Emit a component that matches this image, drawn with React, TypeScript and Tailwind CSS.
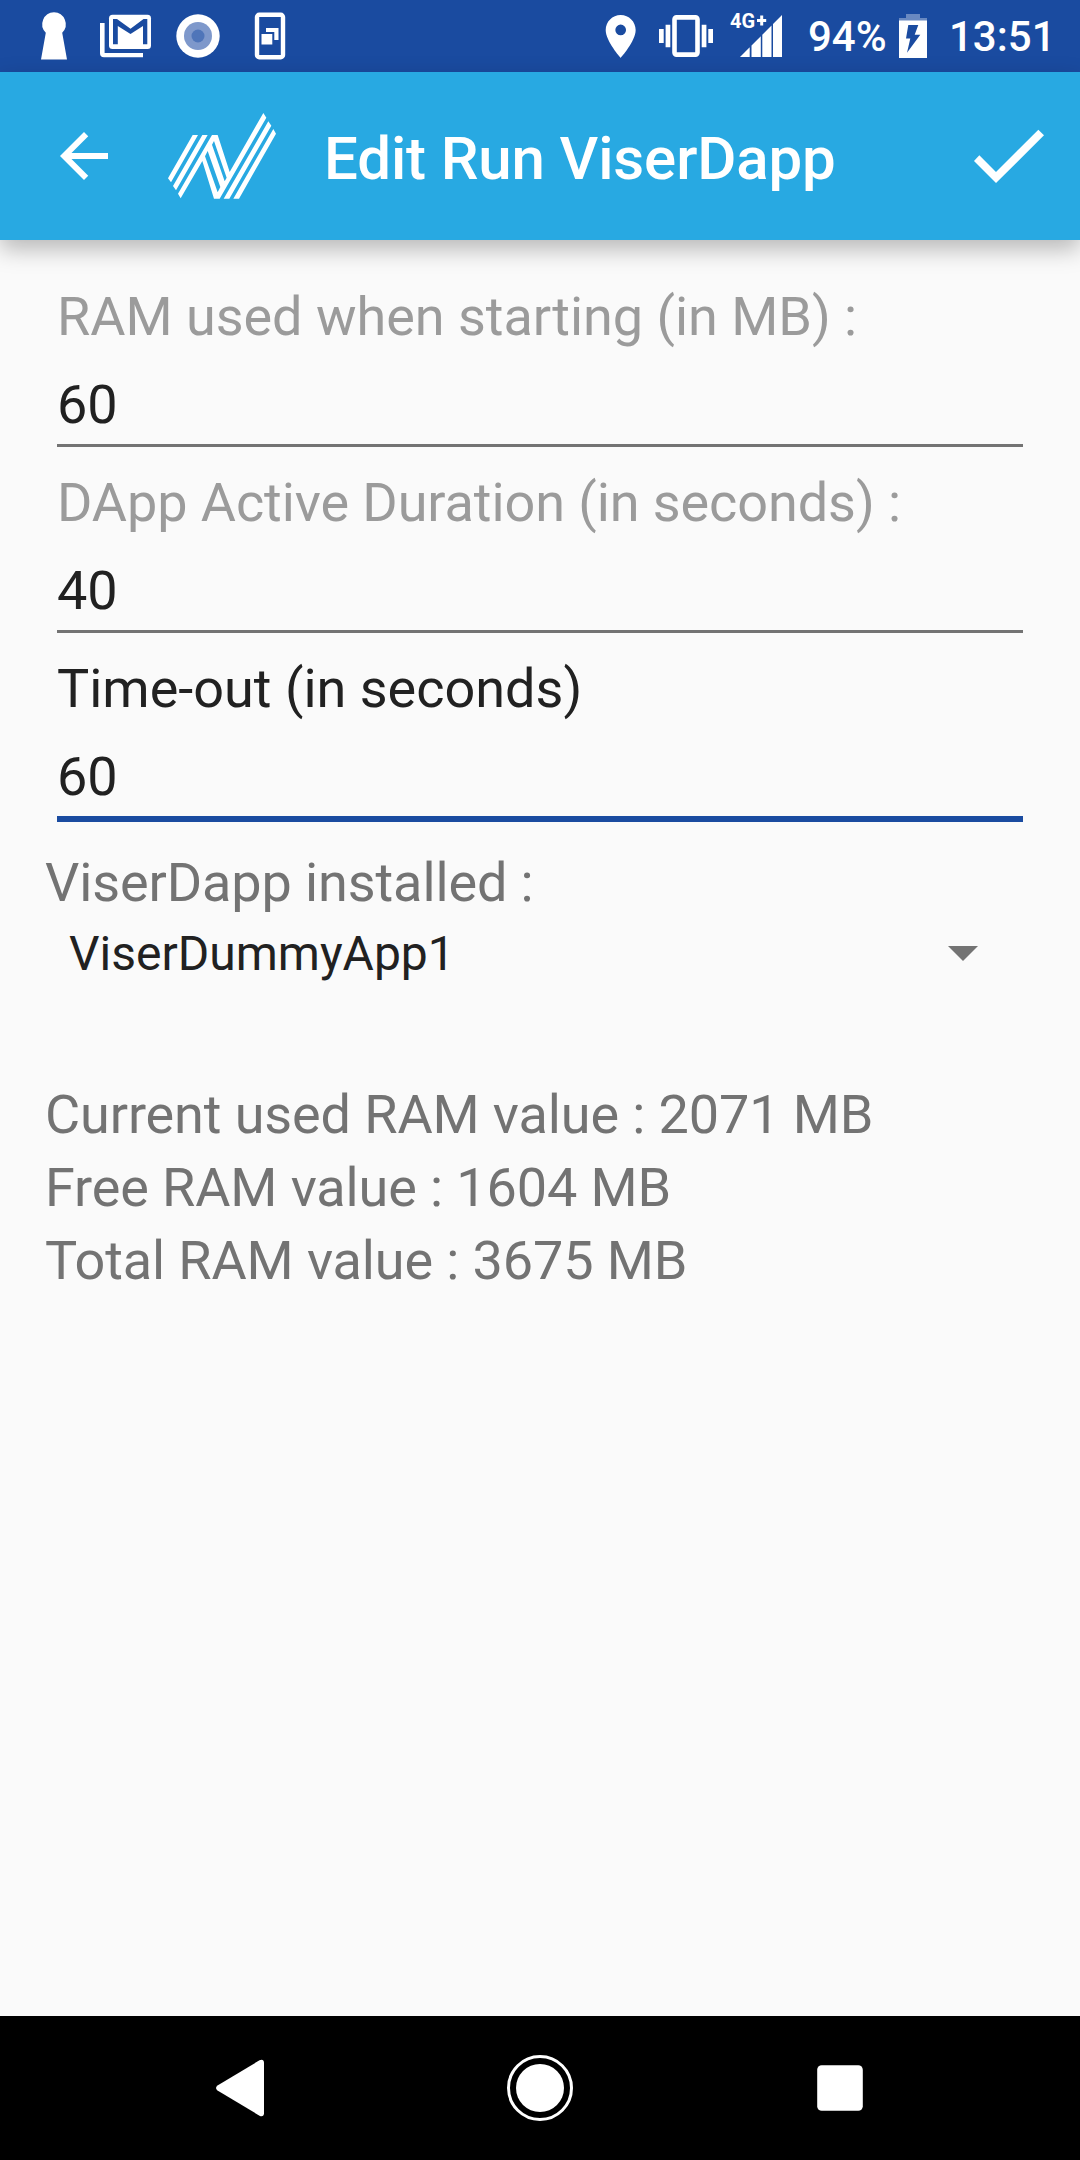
import type { ReactNode } from "react";

function StatusBar() {
  return (
    <div className="flex h-[72px] items-center bg-[#1a4ba0] text-white">
      <svg className="ml-[38px] h-[72px] w-8 shrink-0" viewBox="38 0 32 72" fill="#fff">
        <path d="M54 12.3a12 12 0 0 1 8.2 20.5L67 59.5H41l4.8-26.7A12 12 0 0 1 54 12.3z" />
      </svg>
      <svg className="ml-[26px] h-[72px] w-[60px] shrink-0" viewBox="96 0 60 72" fill="#fff">
        <path d="M100 23h4.6v30H143v4.3h-39a4 4 0 0 1-4-4z" />
        <rect x="109" y="14.7" width="42" height="34.3" rx="3.5" />
        <path fill="#1a4ba0" d="M113 44.3V19h4l13.5 9.8L143.5 19h3.8v25.3H143V26l-12.5 8L117.8 26v18.3z" />
      </svg>
      <svg className="ml-4 h-[72px] w-[52px] shrink-0" viewBox="172 0 52 72">
        <circle cx="198" cy="36" r="21.7" fill="#fff" />
        <circle cx="198" cy="36" r="14" fill="#7e98cb" />
        <circle cx="198" cy="36" r="6.5" fill="#4f75b9" />
      </svg>
      <svg className="ml-6 h-[72px] w-11 shrink-0" viewBox="248 0 44 72" fill="#fff">
        <rect x="257" y="14.8" width="26" height="42.4" rx="2.2" fill="none" stroke="#fff" strokeWidth="4.4" />
        <path d="M261.5 34h10.8v10.5h-10.8zM266 28h12.5v12h-4.2v-8H266z" />
      </svg>
      <div className="flex-1" />
      <svg className="h-[72px] w-9 shrink-0" viewBox="602 0 36 72" fill="#fff">
        <path
          transform="translate(595 10.7) scale(2.14)"
          d="M12 2C8.13 2 5 5.13 5 9c0 5.25 7 13 7 13s7-7.75 7-13c0-3.87-3.13-7-7-7zm0 9.5a2.5 2.5 0 0 1 0-5 2.5 2.5 0 0 1 0 5z"
        />
      </svg>
      <svg className="ml-4 h-[72px] w-16 shrink-0" viewBox="654 0 64 72" fill="#fff">
        <rect x="674.5" y="17.4" width="23" height="37.2" rx="2" fill="none" stroke="#fff" strokeWidth="4.6" />
        <path d="M659 29h4.7v14H659zM665.6 24.7h4.7v22.6h-4.7zM701.7 24.7h4.7v22.6h-4.7zM708.3 29h4.7v14h-4.7z" />
      </svg>
      <div className="relative ml-2 h-[72px] w-[60px] shrink-0">
        <svg className="h-[72px] w-[60px]" viewBox="726 0 60 72" fill="#fff">
          <path d="M740 57l9.7-9.7V57zM751.5 57V45.5l9.3-9.3V57zM762.3 57V34.7l9.2-9.2V57zM773 57V24l9-9v42z" />
          <path d="M760.2 15.5h3V19h3v3h-3v3.5h-3V22h-3.2v-3h3.2z" />
        </svg>
        <span className="absolute left-1 top-[11px] text-[20px] font-bold leading-5">4G</span>
      </div>
      <span className="ml-[22px] w-[80px] shrink-0 pt-0.5 text-[42px] font-medium leading-[72px] whitespace-nowrap">94%</span>
      <svg className="ml-[7px] h-[72px] w-9 shrink-0" viewBox="895 0 36 72" fill="#fff">
        <path fillOpacity=".35" d="M906 14h14v4h7v3h-28v-3h7z" />
        <path d="M899 20.5h28V58h-28z" />
        <path fill="#1a4ba0" d="M908.3 25h10l-3.6 9.7h5.6L907 52.7l3.3-14.2H906z" />
      </svg>
      <span className="ml-[18px] mr-[23px] w-[108px] shrink-0 pt-0.5 text-[42px] font-medium leading-[72px] whitespace-nowrap">13:51</span>
    </div>
  );
}

function ViserLogo() {
  return (
    <svg className="h-[93px] w-[113px] shrink-0" viewBox="405 60 339 279" fill="#fff">
      <path d="M488 135h16l-81 142-9-12zM517 135h16l-95 166-9-13z" />
      <path d="M546 135h17l36 111L700 69l9 14L569 326h-17l-35-113-65 112-8-14z" />
      <path d="M715 94l9 13-126 219h-17zM730 117l8 14-111 195h-17z" />
      <path fill="#28a9e2" d="M552 153l38 110-6 11-38-110zM533 183l38 108-8 16-38-108z" />
    </svg>
  );
}

function AppBar() {
  return (
    <header className="relative flex h-[168px] items-center bg-[#28a9e2] text-white shadow-[0_9px_22px_rgba(0,0,0,0.27)]">
      <svg className="ml-12 size-[72px] shrink-0" viewBox="0 0 24 24" fill="#fff">
        <path d="M20 11H7.83l5.59-5.59L12 4l-8 8 8 8 1.41-1.41L7.83 13H20v-2z" />
      </svg>
      <div className="ml-[45px]">
        <ViserLogo />
      </div>
      <h1 className="ml-[46px] flex-1 pt-1.5 text-[60px] font-medium leading-[72px] tracking-[-0.13px] whitespace-nowrap">
        Edit Run ViserDapp
      </h1>
      <svg className="mr-[30px] h-[60px] w-[80px] shrink-0" viewBox="90 80 240 180" fill="#fff">
        <path d="M102 185l16-17 50 50L295 91l17 17-144 143z" />
      </svg>
    </header>
  );
}

type FieldProps = { label: ReactNode; value: string; active?: boolean };

function Field({ label, value, active = false }: FieldProps) {
  return (
    <label className="block px-3">
      <span className={active ? "block text-[#212121]" : "block text-[#9b9b9b]"}>{label}</span>
      <span
        className={
          active
            ? "mt-4 block border-b-[6px] border-[#1a4ba0] pb-[3px] text-[#212121]"
            : "mt-4 block border-b-[3px] border-[#737373] pb-[3px] text-[#212121]"
        }
      >
        {value}
      </span>
    </label>
  );
}

function Line({ children }: { children: ReactNode }) {
  return <p className="tracking-[-0.11px] text-[#737373]">{children}</p>;
}

export default function App() {
  return (
    <div className="flex h-[2160px] w-[1080px] flex-col overflow-hidden bg-[#fafafa] font-['Roboto',sans-serif]">
      <StatusBar />
      <AppBar />
      <main className="flex-1 px-[45px] pt-[41px] text-[54px] leading-[72px]">
        <div className="flex flex-col gap-5">
          <Field label={<span className="tracking-[-0.03px]">RAM used when starting (in MB) :</span>} value="60" />
          <Field label={<span className="tracking-[-0.08px]">DApp Active Duration (in seconds) :</span>} value="40" />
          <Field label="Time-out (in seconds)" value="60" active />
        </div>
        <div className="mt-[25px]">
          <Line>ViserDapp installed :</Line>
        </div>
        <div className="-mt-px flex items-center justify-between pl-6 pr-[57px] text-[48px] text-[#212121]">
          <span>ViserDummyApp1</span>
          <svg className="mb-px h-[15px] w-[30px]" viewBox="0 0 30 15" fill="#737373">
            <path d="M0 0h30L15 15z" />
          </svg>
        </div>
        <div className="mt-[89px] flex flex-col gap-px">
          <Line>Current used RAM value : 2071 MB</Line>
          <Line>Free RAM value : 1604 MB</Line>
          <Line>Total RAM value : 3675 MB</Line>
        </div>
      </main>
      <nav className="flex h-36 items-center justify-between bg-black px-[204px]">
        <svg className="size-[72px]" viewBox="204 2052 72 72" fill="#fff">
          <path d="M217.5 2085.5l42-25.2c2.500-1.3 4.5-.3 4.5 2.4v50.6c0 2.7-2 3.7-4.5 2.4l-42-25.2c-2-1.5-2-3.5 0-5z" />
        </svg>
        <svg className="size-[72px]" viewBox="0 0 72 72" fill="#fff">
          <circle cx="36" cy="36" r="24" />
          <circle cx="36" cy="36" r="31.5" fill="none" stroke="#fff" strokeWidth="3" />
        </svg>
        <svg className="size-[72px]" viewBox="0 0 72 72" fill="#fff">
          <rect x="13.2" y="13.2" width="45.6" height="45.6" rx="4.5" />
        </svg>
      </nav>
    </div>
  );
}
